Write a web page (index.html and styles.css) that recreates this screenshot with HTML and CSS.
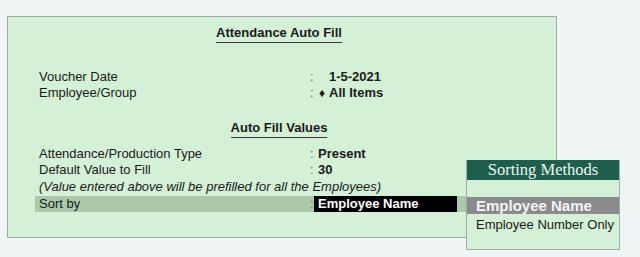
FILE: index.html
```html
<!DOCTYPE html>
<html>
<head>
<meta charset="utf-8">
<link rel="stylesheet" href="styles.css">
</head>
<body>
<div class="panel">
  <div class="heading"><span class="title">Attendance Auto Fill</span></div>
  <div class="rows first">
    <div class="row"><span class="label">Voucher Date</span><span class="colon">:</span><span class="value date">1-5-2021</span></div>
    <div class="row"><span class="label">Employee/Group</span><span class="colon">:</span><span class="value"><span class="dia">&#9830;</span>All Items</span></div>
  </div>
  <div class="heading sub"><span class="title">Auto Fill Values</span></div>
  <div class="rows">
    <div class="row"><span class="label">Attendance/Production Type</span><span class="colon">:</span><span class="value">Present</span></div>
    <div class="row"><span class="label">Default Value to Fill</span><span class="colon">:</span><span class="value">30</span></div>
    <div class="row note">(Value entered above will be prefilled for all the Employees)</div>
    <div class="row active"><span class="label">Sort by</span><span class="colon">:</span><span class="value field">Employee Name</span></div>
  </div>
</div>
<div class="popup">
  <div class="popup-head">Sorting Methods</div>
  <div class="popup-body">
    <div class="opt selected">Employee Name</div>
    <div class="opt">Employee Number Only</div>
  </div>
</div>
</body>
</html>
```
FILE: styles.css
```css
html, body {
  margin: 0;
  padding: 0;
}
body {
  background: #eef5f4;
  width: 640px;
  height: 257px;
  font-family: "Liberation Sans", Arial, sans-serif;
  font-size: 13px;
  color: #1a1a1a;
  position: relative;
  overflow: hidden;
}
.panel {
  margin: 16px 0 0 7px;
  width: 550px;
  height: 222px;
  border: 1px solid #a3aaa4;
  background: #d4f0d7;
  padding-top: 8px;
  box-sizing: border-box;
}
.heading {
  text-align: center;
  padding-right: 6px;
  line-height: 16px;
}
.title {
  display: inline-block;
  font-weight: bold;
  border-bottom: 1px solid #3a3a3a;
  padding-bottom: 1px;
  line-height: 16px;
}
.sub {
  margin-top: 19px;
}
.rows {
  margin-left: 27px;
  width: 445px;
  margin-top: 8px;
}
.rows.first {
  margin-top: 26px;
}
.row {
  display: grid;
  grid-template-columns: 271px 4px 143px 1fr;
  padding-left: 4px;
  line-height: 16px;
  height: 16px;
}
.colon {
  color: #777;
}
.value {
  font-weight: bold;
  padding-left: 4px;
}
.value.date {
  padding-left: 15px;
}
.dia {
  display: inline-block;
  width: 11px;
  font-size: 12px;
  padding-left: 1px;
  box-sizing: border-box;
}
.row.note {
  display: block;
  font-style: italic;
  height: 18px;
  line-height: 18px;
}
.row.active {
  background: #a9c9aa;
}
.value.field {
  background: #000;
  color: #fff;
}
.popup {
  position: absolute;
  left: 466px;
  top: 160px;
  width: 154px;
  height: 90px;
  box-sizing: border-box;
  border: 1px solid #a3aaa4;
  border-top: none;
  background: #d4f0d7;
}
.popup-head {
  background: #1e5e4d;
  color: #eef4f0;
  font-family: "Liberation Serif", "Times New Roman", serif;
  font-size: 16.5px;
  height: 20px;
  line-height: 20px;
  text-align: center;
}
.popup-body {
  padding-top: 17px;
}
.opt {
  padding-left: 9px;
  height: 17px;
  line-height: 17px;
  white-space: nowrap;
}
.opt.selected {
  background: #8a8a8a;
  color: #f4f4f4;
  font-weight: bold;
  font-size: 15px;
}
.opt + .opt {
  margin-top: 2px;
}
```
